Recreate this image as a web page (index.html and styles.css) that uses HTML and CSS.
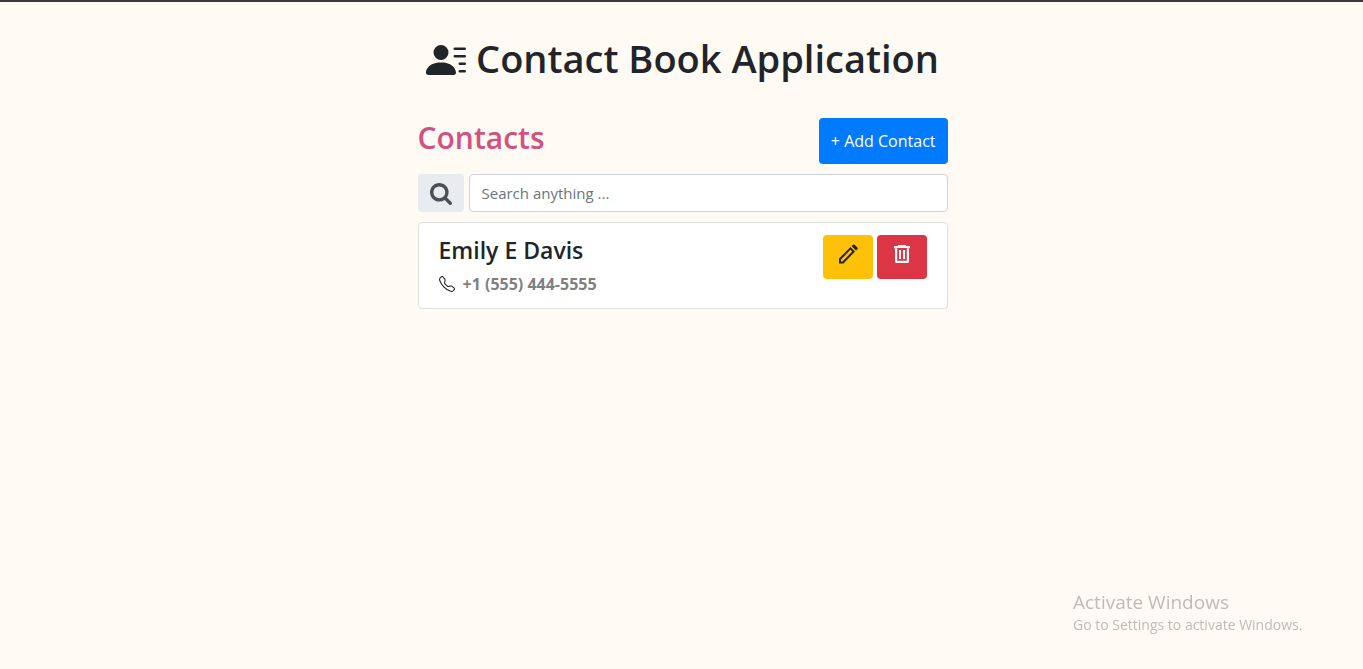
FILE: index.html
```html
<!DOCTYPE html>
<html lang="en">
<head>
<meta charset="utf-8">
<meta name="viewport" content="width=device-width, initial-scale=1">
<title>Contact Book Application</title>
<link rel="stylesheet" href="styles.css">
</head>
<body>
<main class="container">
  <h1 class="title">
    <svg class="title-icon" viewBox="0 0 16 16" fill="currentColor" aria-hidden="true"><path d="M6 8a3 3 0 1 0 0-6 3 3 0 0 0 0 6m-5 6s-1 0-1-1 1-4 6-4 6 3 6 4-1 1-1 1zM11 3.5a.5.5 0 0 1 .5-.5h4a.5.5 0 0 1 0 1h-4a.5.5 0 0 1-.5-.5m.5 2.5a.5.5 0 0 0 0 1h4a.5.5 0 0 0 0-1zm2 3a.5.5 0 0 0 0 1h2a.5.5 0 0 0 0-1zm0 3a.5.5 0 0 0 0 1h2a.5.5 0 0 0 0-1z"/></svg>
    <span>Contact Book Application</span>
  </h1>
  <div class="header">
    <h2 class="subtitle">Contacts</h2>
    <button class="btn btn-add" type="button">+ Add Contact</button>
  </div>
  <form class="search" role="search">
    <label class="search-label" for="search" aria-label="Search">
      <svg class="search-icon" viewBox="0 0 1664 1664" fill="currentColor" aria-hidden="true"><path d="M1152 704q0-185-131.5-316.5T704 256 387.5 387.5 256 704t131.5 316.5T704 1152t316.5-131.5T1152 704zm512 832q0 52-38 90t-90 38q-54 0-90-38l-343-342q-179 124-399 124-143 0-273.5-55.5t-225-150-150-225T0 704t55.5-273.5 150-225 225-150T704 0t273.5 55.5 225 150 150 225T1408 704q0 220-124 399l343 343q37 37 37 90z"/></svg>
    </label>
    <input class="search-input" id="search" type="text" placeholder="Search anything ...">
  </form>
  <article class="card">
    <div class="card-info">
      <h4 class="name">Emily E Davis</h4>
      <div class="phone">
        <svg class="phone-icon" viewBox="0 0 16 16" fill="currentColor" aria-hidden="true"><path d="M3.654 1.328a.678.678 0 0 0-1.015-.063L1.605 2.3c-.483.484-.661 1.169-.45 1.77a17.6 17.6 0 0 0 4.168 6.608 17.6 17.6 0 0 0 6.608 4.168c.601.211 1.286.033 1.77-.45l1.034-1.034a.678.678 0 0 0-.063-1.015l-2.307-1.794a.68.68 0 0 0-.58-.122l-2.19.547a1.75 1.75 0 0 1-1.657-.459L5.482 8.062a1.75 1.75 0 0 1-.46-1.657l.548-2.19a.68.68 0 0 0-.122-.58zM1.884.511a1.745 1.745 0 0 1 2.612.163L6.29 2.98c.329.423.445.974.315 1.494l-.547 2.19a.68.68 0 0 0 .178.643l2.457 2.457a.68.68 0 0 0 .644.178l2.189-.547a1.75 1.75 0 0 1 1.494.315l2.306 1.794c.829.645.905 1.87.163 2.611l-1.034 1.034c-.74.74-1.846 1.065-2.877.702a18.6 18.6 0 0 1-7.01-4.42 18.6 18.6 0 0 1-4.42-7.009c-.362-1.03-.037-2.137.703-2.877z"/></svg>
        <span>+1 (555) 444-5555</span>
      </div>
    </div>
    <div class="actions">
      <button class="btn btn-icon btn-edit" type="button" aria-label="Edit contact">
        <svg class="action-icon" viewBox="0 0 22 22" fill="currentColor" aria-hidden="true"><path fill-rule="evenodd" d="M2 20.500v-5L13.500 4l4.500 4.500L6.500 20.500zM4 18.500h1.500L15.200 8.600 13.400 6.800 4 16.400zM14.500 3 16 1.800q.8-.6 1.600 0l2.800 2.800q.6.800 0 1.600L19 7.500z"/></svg>
      </button>
      <button class="btn btn-icon btn-delete" type="button" aria-label="Delete contact">
        <svg class="action-icon" viewBox="0 0 22 22" fill="currentColor" aria-hidden="true"><path fill-rule="evenodd" d="M7 2h8v1h4v2.200H3V3h4zM4 5h14v13.500q0 1.500-1.500 1.500h-11Q4 20 4 18.500zM6.200 5.200v12.600h9.600V5.200zM8 7h2v9H8zM12 7h2v9h-2z"/></svg>
      </button>
    </div>
  </article>
</main>
<aside class="watermark">
  <p class="watermark-title">Activate Windows</p>
  <p class="watermark-text">Go to Settings to activate Windows.</p>
</aside>
</body>
</html>
```
FILE: styles.css
```css
* { box-sizing: border-box; }
body {
  margin: 0;
  min-height: 100vh;
  padding-left: 2px;
  border-top: 2px solid #3b3840;
  background: #fffaf3;
  color: #212529;
  font: 400 16px/24px "Segoe UI", "Open Sans", "Noto Sans", sans-serif;
}
h1, h2, h4, p { margin: 0; font-weight: 600; }
.container { max-width: 530px; margin: 0 auto; padding-top: 32px; }
.title {
  display: flex;
  justify-content: center;
  align-items: center;
  gap: 10px;
  font-size: 38px;
  line-height: 48px;
  white-space: nowrap;
}
.title-icon { width: 40px; height: 40px; flex: none; margin-top: 4px; }
.header { display: flex; justify-content: space-between; align-items: flex-start; margin-top: 36px; }
.subtitle { color: #d2527f; font-size: 30px; line-height: 40px; }
.btn { border: 0; border-radius: 4px; font: inherit; cursor: pointer; }
.btn-add { height: 46px; padding: 0 12px; background: #007bff; color: #fff; }
.search { display: flex; gap: 5px; margin-top: 10px; }
.search-label {
  display: flex;
  align-items: center;
  justify-content: center;
  width: 46px;
  padding-top: 2px;
  border-radius: 4px;
  background: #e9ecef;
  color: #495057;
}
.search-icon { width: 22px; height: 22px; }
.search-input {
  flex: 1;
  min-width: 0;
  height: 38px;
  padding: 0 12px;
  border: 1px solid #ced4da;
  border-radius: 4px;
  background: #fff;
  font: inherit;
  font-size: 15px;
}
.search-input::placeholder { color: #6c757d; opacity: 1; }
.card {
  display: flex;
  justify-content: space-between;
  align-items: flex-start;
  margin-top: 10px;
  padding: 12px 20px;
  border: 1px solid #dfdfdf;
  border-radius: 4px;
  background: #fff;
}
.name { font-size: 23px; line-height: 30px; }
.phone { display: flex; align-items: center; gap: 8px; margin-top: 7px; color: #808080; font-weight: 700; }
.phone-icon { width: 16px; height: 16px; color: #212529; }
.actions { display: flex; gap: 4px; }
.btn-icon { display: flex; justify-content: center; width: 50px; height: 44px; padding: 8px 0 0; }
.btn-edit { background: #ffc107; color: #212529; }
.btn-delete { background: #dc3545; color: #fff; }
.action-icon { width: 22px; height: 22px; }
.watermark { position: fixed; right: 54px; bottom: 34px; width: 236px; color: #bfbcb8; }
.watermark p { font-weight: 400; }
.watermark-title { font-size: 19px; line-height: 26px; }
.watermark-text { font-size: 14px; line-height: 20px; }
```
